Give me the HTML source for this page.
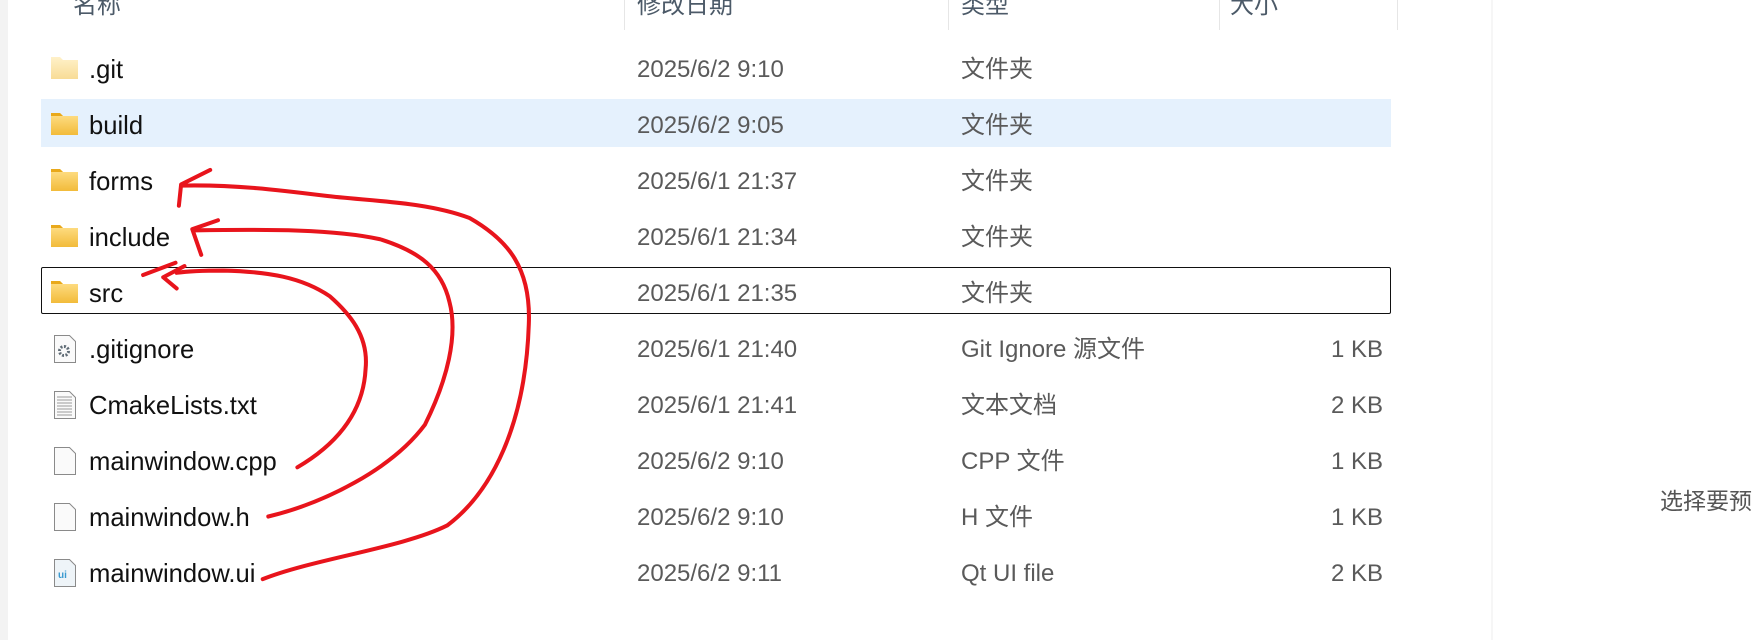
<!DOCTYPE html>
<html><head><meta charset="utf-8"><style>
html,body{margin:0;padding:0;background:#fff;}
body{width:1753px;height:640px;position:relative;overflow:hidden;font-family:"Liberation Sans","Noto Sans CJK SC",sans-serif;}
.t{position:absolute;white-space:nowrap;font-size:24px;line-height:30px;}
.n{color:#111;left:89px;font-size:25.6px;}
.d{color:#5a5a5a;left:637px;}
.y{color:#5a5a5a;left:961px;}
.s{color:#5a5a5a;right:370px;text-align:right;}
.h{position:absolute;top:-9px;font-size:24px;line-height:30px;color:#4c5a68;}
.sep{position:absolute;top:0;width:1px;height:30px;background:#e6e6e6;}
</style></head><body>
<div style="position:absolute;left:0;top:0;width:8px;height:640px;background:#f3f3f3"></div>
<div style="position:absolute;left:1491px;top:0;width:2px;height:640px;background:#f6f6f6"></div>
<div class="h" style="left:73px">名称</div>
<div class="h" style="left:637px">修改日期</div>
<div class="h" style="left:961px">类型</div>
<div class="h" style="left:1230px">大小</div>
<div class="sep" style="left:624px"></div><div class="sep" style="left:948px"></div><div class="sep" style="left:1219px"></div><div class="sep" style="left:1397px"></div>
<div style="position:absolute;left:41px;top:99px;width:1350px;height:48px;background:#e5f1fd"></div>
<div style="position:absolute;left:41px;top:267px;width:1348px;height:45px;border:1.5px solid #111;border-radius:2px"></div>

<svg width="1753" height="640" style="position:absolute;left:0;top:0">
<defs>
<linearGradient id="fy" x1="0" y1="0" x2="0" y2="1"><stop offset="0" stop-color="#ffe08a"/><stop offset="1" stop-color="#f2bb3a"/></linearGradient>
<linearGradient id="fp" x1="0" y1="0" x2="0" y2="1"><stop offset="0" stop-color="#fff1c9"/><stop offset="1" stop-color="#f8dc96"/></linearGradient>
</defs>
<path d="M51 57h9l3 3h15v19H51z" fill="url(#fp)"/>
<path d="M51 113h9l3 3h15v19H51z" fill="url(#fy)"/><path d="M51 113h9l3 3H51z" fill="#e9a91b"/>
<path d="M51 169h9l3 3h15v19H51z" fill="url(#fy)"/><path d="M51 169h9l3 3H51z" fill="#e9a91b"/>
<path d="M51 225h9l3 3h15v19H51z" fill="url(#fy)"/><path d="M51 225h9l3 3H51z" fill="#e9a91b"/>
<path d="M51 281h9l3 3h15v19H51z" fill="url(#fy)"/><path d="M51 281h9l3 3H51z" fill="#e9a91b"/>
<g fill="#fafafa" stroke="#8a8a8a" stroke-width="1">
<path d="M54.5 335.5h15l6 6v21h-21z"/>
<path d="M54.5 391.5h15l6 6v21h-21z"/>
<path d="M54.5 447.5h15l6 6v21h-21z"/>
<path d="M54.5 503.5h15l6 6v21h-21z"/>
<path d="M54.5 559.5h15l6 6v21h-21z" fill="#eef4f8"/>
</g>
<circle cx="64" cy="351" r="4.5" fill="none" stroke="#5f6b75" stroke-width="3" stroke-dasharray="2 1.5"/>
<g stroke="#9a9a9a" stroke-width="1"><path d="M57 397h15M57 400h15M57 403h15M57 406h15M57 409h15M57 412h15M57 415h15"/></g>
<text x="58" y="578" font-family="Liberation Sans" font-size="10" font-weight="bold" fill="#3a9ad0">ui</text>
<g fill="none" stroke="#e8141c" stroke-width="3.6" stroke-linecap="round" stroke-linejoin="round" transform="scale(1.118)">
<path d="M235 518C280 500 360 490 400 470C440 440 470 380 473 290C475 240 455 215 420 195C380 180 330 180 290 175C250 170 210 165 162 166"/>
<path d="M188 152L162 165L160 184"/>
<path d="M240 462C290 450 350 420 380 380C400 340 410 300 402 270C395 240 375 225 340 214C300 205 240 205 175 206"/>
<path d="M195 197L172 205L180 228"/>
<path d="M266 418C300 398 325 370 327 330C330 300 312 280 295 265C270 248 240 243 200 242C180 242 165 243 158 244"/>
<path d="M165 238L146 248L158 258"/>
<path d="M128 246L157 235"/>
</g>
</svg>

<div class="t n" style="top:55px">.git</div>
<div class="t n" style="top:111px">build</div>
<div class="t n" style="top:167px">forms</div>
<div class="t n" style="top:223px">include</div>
<div class="t n" style="top:279px">src</div>
<div class="t n" style="top:335px">.gitignore</div>
<div class="t n" style="top:391px">CmakeLists.txt</div>
<div class="t n" style="top:447px">mainwindow.cpp</div>
<div class="t n" style="top:503px">mainwindow.h</div>
<div class="t n" style="top:559px">mainwindow.ui</div>

<div class="t d" style="top:55px">2025/6/2 9:10</div>
<div class="t d" style="top:111px">2025/6/2 9:05</div>
<div class="t d" style="top:167px">2025/6/1 21:37</div>
<div class="t d" style="top:223px">2025/6/1 21:34</div>
<div class="t d" style="top:279px">2025/6/1 21:35</div>
<div class="t d" style="top:335px">2025/6/1 21:40</div>
<div class="t d" style="top:391px">2025/6/1 21:41</div>
<div class="t d" style="top:447px">2025/6/2 9:10</div>
<div class="t d" style="top:503px">2025/6/2 9:10</div>
<div class="t d" style="top:559px">2025/6/2 9:11</div>

<div class="t y" style="top:55px">文件夹</div>
<div class="t y" style="top:111px">文件夹</div>
<div class="t y" style="top:167px">文件夹</div>
<div class="t y" style="top:223px">文件夹</div>
<div class="t y" style="top:279px">文件夹</div>
<div class="t y" style="top:335px">Git Ignore 源文件</div>
<div class="t y" style="top:391px">文本文档</div>
<div class="t y" style="top:447px">CPP 文件</div>
<div class="t y" style="top:503px">H 文件</div>
<div class="t y" style="top:559px">Qt UI file</div>

<div class="t s" style="top:335px">1 KB</div>
<div class="t s" style="top:391px">2 KB</div>
<div class="t s" style="top:447px">1 KB</div>
<div class="t s" style="top:503px">1 KB</div>
<div class="t s" style="top:559px">2 KB</div>

<div class="t" style="left:1660px;top:486px;font-size:23px;color:#555">选择要预</div>
</body></html>
